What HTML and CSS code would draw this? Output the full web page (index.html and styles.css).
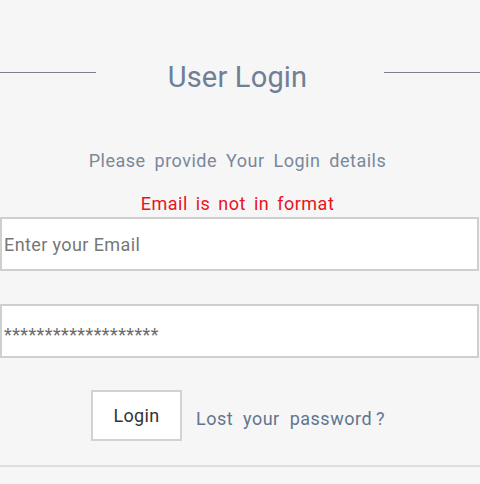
FILE: index.html
```html
<!DOCTYPE html>
<html>
<head>
<meta charset="utf-8">
<link rel="stylesheet" href="styles.css">
</head>
<body>
<div class="page">
  <div class="heading">
    <span class="rule"></span>
    <h1 class="title">User Login</h1>
    <span class="rule"></span>
  </div>
  <p class="subtitle">Please provide Your Login details</p>
  <p class="error">Email is not in format</p>
  <form class="form">
    <input class="field" type="text" placeholder="Enter your Email">
    <input class="field field-pass" type="text" value="*******************">
    <div class="actions">
      <button class="btn" type="button">Login</button>
      <a class="lost" href="#">Lost your password<span class="q">?</span></a>
    </div>
  </form>
  <hr class="bottom">
</div>
</body>
</html>
```

FILE: styles.css
```css
html, body {
  margin: 0;
  padding: 0;
  background: #f6f6f6;
}
body {
  font-family: Roboto, "Noto Sans", sans-serif;
}
.page {
  padding-top: 56px;
}
.heading {
  display: flex;
  align-items: flex-start;
  justify-content: space-between;
}
.rule {
  display: block;
  width: 96px;
  height: 1px;
  margin-top: 16px;
  background: #7d8189;
}
.title {
  margin: 0;
  padding: 4px 5px 0 0;
  font-weight: 400;
  font-size: 29px;
  letter-spacing: 0.2px;
  color: #6f7f96;
  line-height: 34px;
}
.subtitle {
  margin: 0;
  margin-top: 56px;
  padding-right: 5px;
  text-align: center;
  font-size: 18px;
  line-height: 22px;
  color: #7a889c;
  letter-spacing: 0.5px;
  word-spacing: 4px;
}
.error {
  margin: 0;
  margin-top: 21px;
  padding-right: 5px;
  text-align: center;
  font-size: 18px;
  line-height: 22px;
  color: #e8141c;
  letter-spacing: 0.5px;
  word-spacing: 3px;
}
.form {
  margin: 0;
  margin-top: 2px;
  display: flex;
  flex-direction: column;
}
.field {
  box-sizing: border-box;
  width: 479px;
  height: 54px;
  margin: 0;
  border: 2px solid #cfcfcf;
  background: #fff;
  padding: 0 2px;
  font-family: Roboto, sans-serif;
  font-size: 18px;
  letter-spacing: 0.4px;
  color: #777;
  outline: none;
}
.field::placeholder {
  color: #777;
}
.field-pass {
  margin-top: 33px;
  padding-top: 6px;
  color: #6b6b6b;
}
.actions {
  display: flex;
  align-items: center;
  justify-content: center;
  margin-top: 32px;
  gap: 14px;
  padding-right: 4px;
}
.btn {
  width: 91px;
  height: 51px;
  background: #fff;
  border: 2px solid #d2d2d2;
  font-family: Roboto, sans-serif;
  font-size: 18px;
  letter-spacing: 0.3px;
  color: #333;
  padding: 0 0 1px;
}
.lost {
  font-size: 18px;
  color: #62758d;
  text-decoration: none;
  letter-spacing: 0.5px;
  word-spacing: 5px;
  padding-top: 6px;
}
.q {
  margin-left: 4px;
}
.bottom {
  margin: 24px 0 0;
  border: 0;
  height: 2px;
  background: #dedede;
}
```
